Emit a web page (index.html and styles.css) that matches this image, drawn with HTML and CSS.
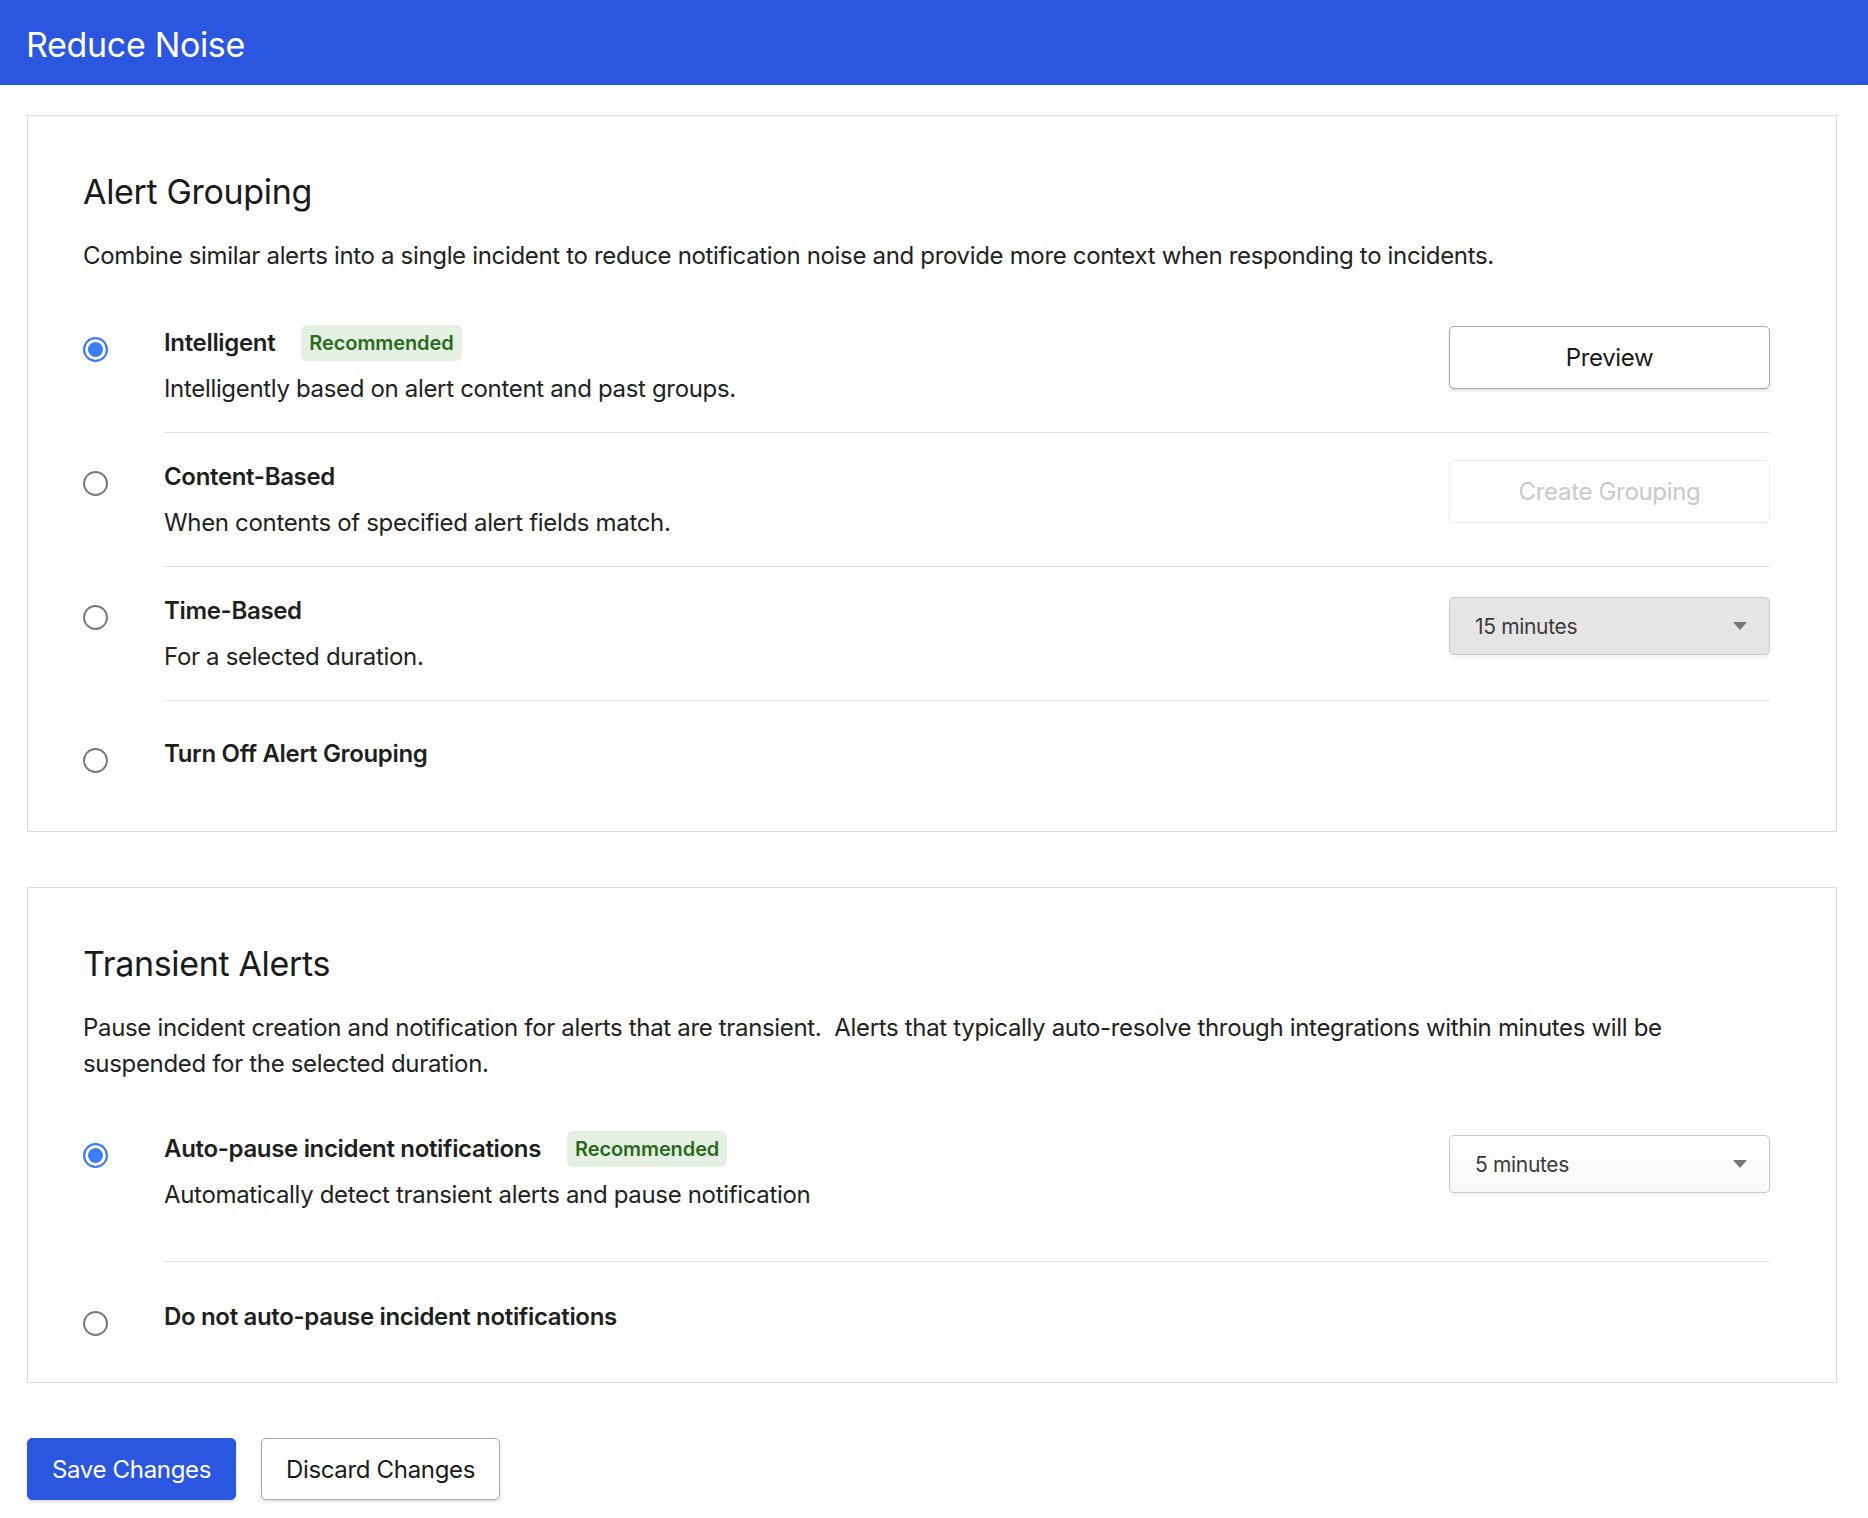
FILE: index.html
```html
<!DOCTYPE html>
<html lang="en">
<head>
<meta charset="utf-8">
<title>Reduce Noise</title>
<link rel="stylesheet" href="styles.css">
</head>
<body>
<header class="topbar">
  <h1 class="topbar-title">Reduce Noise</h1>
</header>
<main class="content">
  <section class="card card--first">
    <h2 class="card-title">Alert Grouping</h2>
    <p class="card-desc">Combine similar alerts into a single incident to reduce notification noise and provide more context when responding to incidents.</p>
    <div class="options">
      <div class="option">
        <div class="option-radio"><span class="radio radio--checked"></span></div>
        <div class="option-body">
          <div class="option-text">
            <div class="option-label">Intelligent <span class="badge">Recommended</span></div>
            <div class="option-desc">Intelligently based on alert content and past groups.</div>
          </div>
          <div class="option-control"><button class="btn btn--wide">Preview</button></div>
        </div>
      </div>
      <div class="option">
        <div class="option-radio"><span class="radio"></span></div>
        <div class="option-body">
          <div class="option-text">
            <div class="option-label">Content-Based</div>
            <div class="option-desc">When contents of specified alert fields match.</div>
          </div>
          <div class="option-control"><button class="btn btn--wide btn--disabled">Create Grouping</button></div>
        </div>
      </div>
      <div class="option">
        <div class="option-radio"><span class="radio"></span></div>
        <div class="option-body">
          <div class="option-text">
            <div class="option-label">Time-Based</div>
            <div class="option-desc">For a selected duration.</div>
          </div>
          <div class="option-control option-control--select">
            <div class="select select--disabled"><span>15 minutes</span><span class="caret"></span></div>
          </div>
        </div>
      </div>
      <div class="option option--plain">
        <div class="option-radio"><span class="radio"></span></div>
        <div class="option-body option-body--last option-body--end1">
          <div class="option-text">
            <div class="option-label">Turn Off Alert Grouping</div>
          </div>
        </div>
      </div>
    </div>
  </section>

  <section class="card card--second">
    <h2 class="card-title">Transient Alerts</h2>
    <p class="card-desc">Pause incident creation and notification for alerts that are transient.&nbsp; Alerts that typically auto-resolve through integrations within minutes will be suspended for the selected duration.</p>
    <div class="options options--second">
      <div class="option">
        <div class="option-radio"><span class="radio radio--checked"></span></div>
        <div class="option-body option-body--tall">
          <div class="option-text">
            <div class="option-label">Auto-pause incident notifications <span class="badge">Recommended</span></div>
            <div class="option-desc">Automatically detect transient alerts and pause notification</div>
          </div>
          <div class="option-control option-control--select">
            <div class="select"><span>5 minutes</span><span class="caret"></span></div>
          </div>
        </div>
      </div>
      <div class="option option--plain option--plain-b">
        <div class="option-radio"><span class="radio"></span></div>
        <div class="option-body option-body--last option-body--end2">
          <div class="option-text">
            <div class="option-label">Do not auto-pause incident notifications</div>
          </div>
        </div>
      </div>
    </div>
  </section>

  <div class="actions">
    <button class="btn btn--primary">Save Changes</button>
    <button class="btn btn--outline">Discard Changes</button>
  </div>
</main>
</body>
</html>
```

FILE: styles.css
```css
* { box-sizing: border-box; }

html, body {
  margin: 0;
  padding: 0;
  background: #ffffff;
}

body {
  font-family: "Inter", "Roboto", sans-serif;
  color: #1f1f1f;
  letter-spacing: -0.33px;
}

.topbar {
  height: 85px;
  background: #2b56df;
  display: flex;
  align-items: center;
  padding: 4px 26px 0;
}

.topbar-title {
  margin: 0;
  color: #ffffff;
  font-size: 34px;
  font-weight: 400;
  line-height: 40px;
}

.content {
  padding: 30px 31px 0 27px;
}

.card {
  border: 1px solid #dcdcdc;
  padding: 56px 66px 0 55px;
}

.card--second {
  margin-top: 55px;
}

.card-title {
  margin: 0;
  font-size: 34px;
  font-weight: 400;
  line-height: 40px;
  color: #1a1a1a;
}

.card-desc {
  margin: 26px 0 0;
  font-size: 24px;
  line-height: 36px;
  color: #222;
  max-width: 1640px;
}

.options {
  margin-top: 25px;
}

.options--second {
  margin-top: 23px;
}

.option {
  display: flex;
  padding-top: 26px;
}

.option--plain {
  padding-top: 35px;
}

.option--plain-b {
  padding-top: 37px;
}

.option-radio {
  width: 81px;
  flex: 0 0 81px;
}

.radio {
  display: block;
  width: 25px;
  height: 25px;
  margin-top: 12px;
  border-radius: 50%;
  border: 2px solid #7a7a7a;
  background: #fff;
}

.radio--checked {
  border: 2px solid #3c7cf6;
  box-shadow: inset 0 0 0 3px #fff;
  background: #3c7cf6;
}

.option-body {
  flex: 1;
  display: flex;
  justify-content: space-between;
  align-items: flex-start;
  padding-bottom: 25px;
  border-bottom: 1px solid #e2e2e2;
}

.option-body--tall {
  padding-bottom: 48px;
}

.option-body--last {
  border-bottom: none;
}

.option-body--end1 {
  padding-bottom: 59px;
}

.option-body--end2 {
  padding-bottom: 47px;
}

.option-label {
  font-size: 24px;
  line-height: 36px;
  height: 36px;
  font-weight: 600;
  color: #1f1f1f;
  display: flex;
  align-items: center;
}

.option-desc {
  margin-top: 10px;
  font-size: 24px;
  line-height: 36px;
  color: #222;
}

.badge {
  display: inline-block;
  margin-left: 26px;
  height: 36px;
  line-height: 36px;
  padding: 0 8px;
  border-radius: 6px;
  background: #e4f1e2;
  color: #2b6a1c;
  font-size: 20px;
  font-weight: 600;
  letter-spacing: -0.1px;
}

.option-control {
  margin-top: 1px;
}

.option-control--select {
  margin-top: 4px;
}

.btn {
  font-family: inherit;
  font-size: 24px;
  letter-spacing: -0.33px;
  height: 62px;
  padding: 0 24px;
  border-radius: 5px;
  border: 1px solid #a9a9a9;
  background: #fff;
  color: #1a1a1a;
  box-shadow: 0 2px 3px rgba(0, 0, 0, 0.12);
  cursor: pointer;
}

.btn--wide {
  width: 321px;
  height: 63px;
}

.btn--disabled {
  border-color: #ececec;
  color: #c9c9c9;
  box-shadow: 0 1px 2px rgba(0, 0, 0, 0.04);
}

.select {
  width: 321px;
  height: 58px;
  border: 1px solid #c9c9c9;
  border-radius: 5px;
  background: linear-gradient(#ffffff, #f9f9f9);
  box-shadow: 0 3px 3px rgba(0, 0, 0, 0.05);
  display: flex;
  align-items: center;
  justify-content: space-between;
  padding: 0 22px 0 25px;
  font-size: 21px;
  color: #3a3a3a;
}

.select--disabled {
  background: #e5e5e5;
}

.caret {
  width: 0;
  height: 0;
  border-left: 7px solid transparent;
  border-right: 7px solid transparent;
  border-top: 8px solid #777;
}

.actions {
  display: flex;
  gap: 25px;
  margin-top: 55px;
  padding-bottom: 20px;
}

.btn--primary {
  background: #2b56df;
  border-color: #2b56df;
  color: #fff;
  width: 209px;
  padding: 0;
}

.btn--outline {
  width: 239px;
  padding: 0;
}
```
